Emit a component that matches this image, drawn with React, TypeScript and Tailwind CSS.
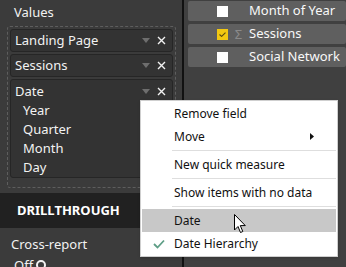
import React from 'react';

const font: React.CSSProperties = { fontFamily: '"Segoe UI", "Noto Sans", "Open Sans", sans-serif' };

const Field = ({ label }: { label: string }) => (
  <div className="h-[23px] shrink-0 rounded-[3px] border border-[#262626] bg-[#333333] flex items-center pl-[4px] pr-[6px]">
    <span className="flex-1 text-[13px] text-[#f2f2f2]">{label}</span>
    <FieldIcons />
  </div>
);

const FieldIcons = () => (
  <div className="flex items-center gap-[7px]">
    <svg width="8" height="5" viewBox="0 0 8 5">
      <path d="M0 0 H8 L4 5 Z" fill="#6e6e6e" />
    </svg>
    <svg width="9" height="9" viewBox="0 0 9 9">
      <path d="M1 1 L8 8 M8 1 L1 8" stroke="#f2f2f2" strokeWidth="1.4" />
    </svg>
  </div>
);

const RightRow = ({ label, checked }: { label: string; checked?: boolean }) => (
  <div className="h-[20px] shrink-0 rounded-[2px] bg-[#5f5f5f] flex items-center pl-[29px]">
    {checked ? (
      <div className="w-[11px] h-[11px] bg-[#f2c811] flex items-center justify-center">
        <svg width="7" height="5" viewBox="0 0 7 5">
          <path d="M0.5 2.5 L2.6 4.4 L6.5 0.6" stroke="#5a4a10" strokeWidth="1.1" fill="none" />
        </svg>
      </div>
    ) : (
      <div className="w-[11px] h-[11px] bg-white" />
    )}
    <div className="w-[21px] flex justify-center text-[13px] text-[#8a8a8a] leading-none">
      {checked ? 'Σ' : ''}
    </div>
    <span className="text-[13px] text-[#f8f8f8]">{label}</span>
  </div>
);

const MenuItem = ({ label, children, active, check }: { label: string; children?: React.ReactNode; active?: boolean; check?: boolean }) => (
  <div className={`relative h-[23px] flex items-center pl-[32px] pr-[22px] ${active ? 'bg-[#c8c8c8]' : ''}`}>
    {check && (
      <svg className="absolute left-[11px] top-[7px]" width="12" height="10" viewBox="0 0 12 10">
        <path d="M1 5 L4.5 8.5 L11 1.5" stroke="#5e9e86" strokeWidth="1.8" fill="none" />
      </svg>
    )}
    <span className="flex-1 text-[12px] text-[#111]">{label}</span>
    {children}
  </div>
);

const Sep = () => <div className="h-px bg-[#dedede] ml-[30px] my-[2px]" />;

export default function App() {
  return (
    <div className="w-[346px] h-[267px] overflow-hidden relative flex bg-[#404040]" style={font}>
      {/* left panel */}
      <div className="w-[182px] h-full shrink-0 bg-[#3b3b3b] flex flex-col">
        <div className="h-[26px] shrink-0 pl-[14px] pt-[3px] text-[13px] text-[#f2f2f2] leading-[18px]">Values</div>
        <div className="shrink-0 mx-[7px] w-[169px] border border-dashed border-[#5e5e5e] rounded-[3px] px-[2px] pt-[2px] pb-[9px] flex flex-col gap-[2px]">
          <Field label="Landing Page" />
          <Field label="Sessions" />
          <div className="shrink-0 rounded-[3px] border border-[#262626] bg-[#333333]">
            <div className="h-[21px] flex items-center pl-[4px] pr-[6px] pt-[2px]">
              <span className="flex-1 text-[13px] text-[#f2f2f2]">Date</span>
              <FieldIcons />
            </div>
            <div className="flex flex-col pl-[12px] text-[13px] text-[#f2f2f2]">
              {['Year', 'Quarter', 'Month', 'Day'].map((d) => (
                <div key={d} className="h-[19px] flex items-center">{d}</div>
              ))}
            </div>
          </div>
        </div>
        <div className="shrink-0 mt-[5px] h-[35px] bg-[#212121] flex items-center pl-[17px] text-[13px] font-bold text-white">
          DRILLTHROUGH
        </div>
        <div className="shrink-0 pl-[11px] pt-[7px] text-[13px] text-[#f2f2f2] leading-[18px]">Cross-report</div>
        <div className="shrink-0 pl-[14px] pt-[3px] flex items-center gap-[3px] text-[13px] text-[#f2f2f2] leading-[18px]">
          Off
          <div className="w-[10px] h-[10px] rounded-full border-2 border-[#f2f2f2]" />
        </div>
      </div>
      <div className="w-[2px] h-full shrink-0 bg-[#111]" />
      {/* right panel */}
      <div className="flex-1 flex flex-col gap-[3px] pt-[1px] pl-[4px]">
        <RightRow label="Month of Year" />
        <RightRow label="Sessions" checked />
        <RightRow label="Social Network" />
      </div>

      {/* context menu */}
      <div className="absolute left-[140px] top-[100px] w-[198px] bg-white border border-[#cfcfcf] p-[1px] shadow-sm">
        <MenuItem label="Remove field" />
        <MenuItem label="Move">
          <svg width="4" height="7" viewBox="0 0 4 7">
            <path d="M0 0 L4 3.5 L0 7 Z" fill="#111" />
          </svg>
        </MenuItem>
        <Sep />
        <MenuItem label="New quick measure" />
        <Sep />
        <MenuItem label="Show items with no data" />
        <Sep />
        <MenuItem label="Date" active />
        <MenuItem label="Date Hierarchy" check />
      </div>

      {/* cursor */}
      <svg className="absolute left-[234px] top-[214px]" width="13" height="21" viewBox="0 0 13 21">
        <path d="M0.5 0.5 L0.5 16 L4 12.5 L6.5 18.5 L8.8 17.5 L6.3 11.6 L11.3 11.6 Z" fill="#fff" stroke="#000" strokeWidth="1" />
      </svg>
    </div>
  );
}
